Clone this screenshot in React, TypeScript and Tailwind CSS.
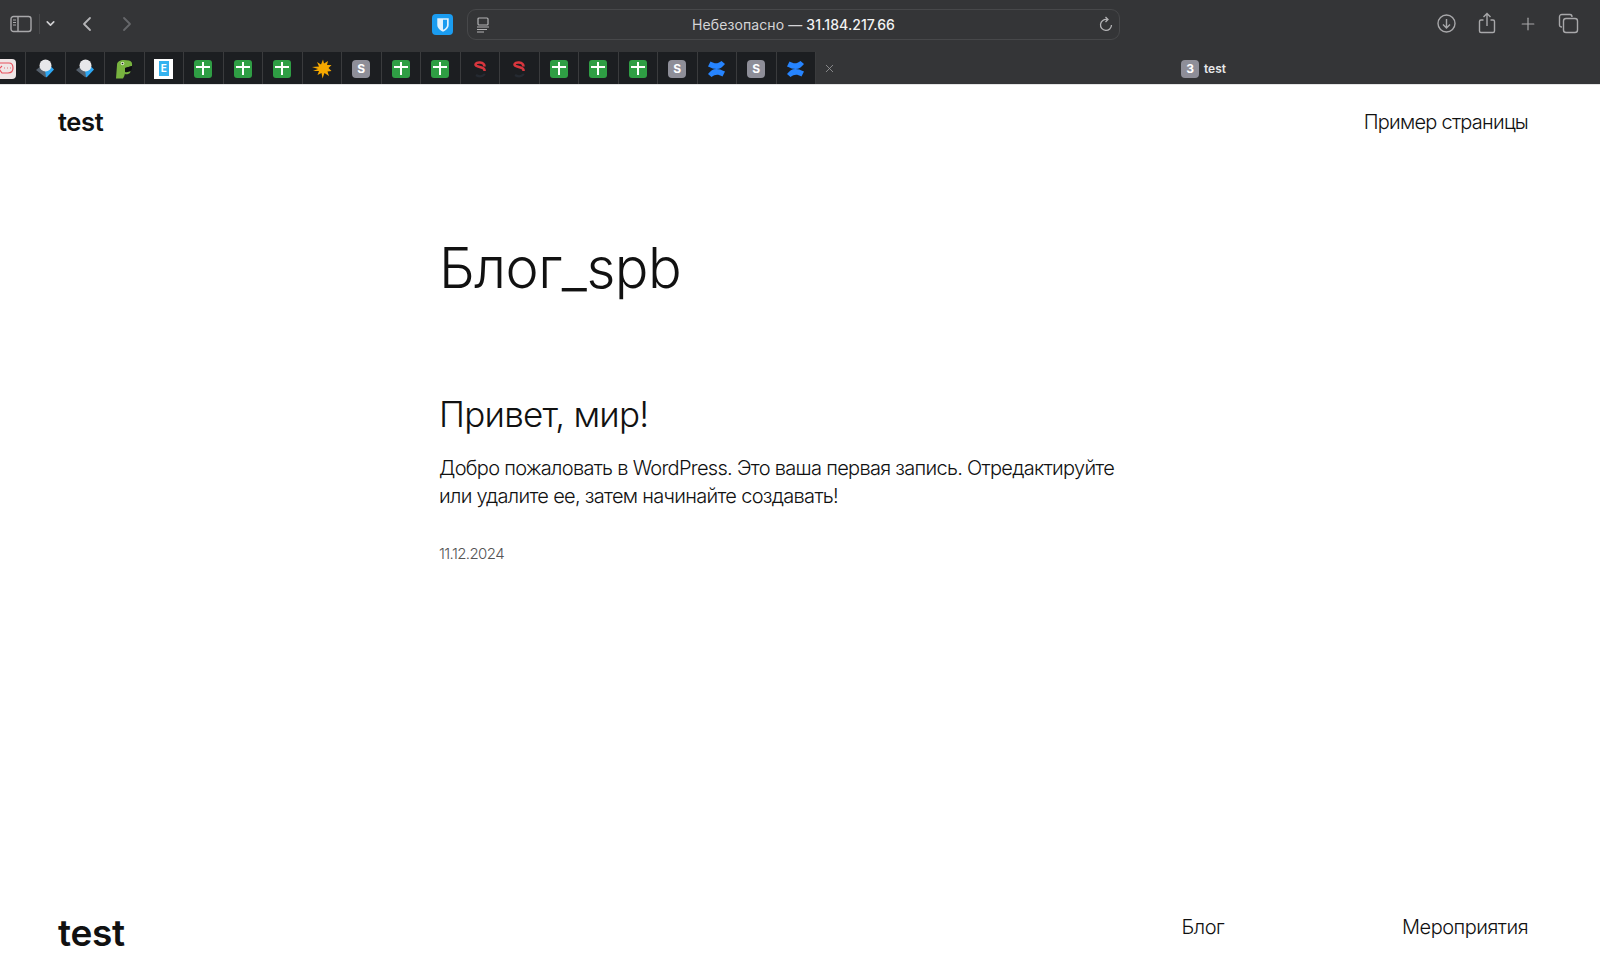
import { ChevronDown, ChevronLeft, ChevronRight, Plus, X } from 'lucide-react';

const Sheet = () => (
  <div className="w-[18px] h-[18px] rounded-[3px] bg-[#2f9e44] relative">
    <div className="absolute left-[2px] w-[14px] h-[2px] bg-white top-[6px]" />
    <div className="absolute left-[8px] w-[2px] h-[13px] bg-white top-[2px]" />
  </div>
);

const Grey = ({ label }: { label: string }) => (
  <div className="w-[18px] h-[18px] rounded-[4px] bg-[#8e8e98] flex items-center justify-center text-white text-[12px] font-bold leading-none">
    {label}
  </div>
);

const Cube = () => (
  <svg width="20" height="19" viewBox="0 0 20 19">
    <path d="M1 11 L6 7 L11 11 L11 18 Q10.5 18.5 10 18 Z" fill="#56606c" />
    <path d="M19 10.5 L14.5 6 L10 11 L11 18 Q11.5 18.5 12 18 Z" fill="#2ea7f2" />
    <circle cx="10.5" cy="6.5" r="6" fill="#e8e8ea" />
  </svg>
);

const Dino = () => (
  <svg width="18" height="20" viewBox="0 0 18 20">
    <path d="M1 19.5 L2 6 C2 2.5 5 1 9 1 L14 1.5 C16.5 2 17.5 4 17 7 L10 9 C10.5 13 10 17 8 19.5 Z" fill="#78b33f" />
    <circle cx="7.5" cy="4.5" r="1.8" fill="#d8e8c0" />
    <circle cx="7.5" cy="4.5" r="0.8" fill="#1c1e21" />
    <path d="M10 9 L17 7 L17 10 C15 13 12 13.5 10 13 Z" fill="#0e0f10" />
    <path d="M10 13 C12 13.5 14 13 15.5 12 L15 14 C13 15.5 11 15.5 10 15 Z" fill="#78b33f" />
  </svg>
);

const EFile = () => (
  <div className="w-[19px] h-[20px] bg-white flex items-center justify-center">
    <div className="w-[10px] h-[15px] bg-[#35b3f0] text-white text-[10px] font-bold leading-[15px] text-center">E</div>
  </div>
);

const Burst = () => (
  <svg width="20" height="20" viewBox="0 0 20 20">
    <path d="M0 8 L7 7.5 L5 3 L9 5.5 L11 0.5 L12 4.5 L16 2 L15 6 L19.5 6 L16.5 9 L19.5 12 L15.5 12.5 L17 17 L12.5 14 L10.5 19.5 L9.5 14 L5.5 16 L7 12 L1 12 L6 10 Z" fill="#f6a800" />
  </svg>
);

const Snake = () => (
  <svg width="14" height="18" viewBox="0 0 14 18">
    <path d="M11.5 6.5 C11.5 1.5 2.5 1.5 2.5 4.5 C2.5 7.5 11.5 6.5 11.5 10 L11.5 11" fill="none" stroke="#d9363e" strokeWidth="2.6" />
    <path d="M3 15 C6 17 9 17 12 14" fill="none" stroke="#252a31" strokeWidth="2.4" />
  </svg>
);

const Confluence = () => (
  <svg width="19" height="18" viewBox="0 0 19 18">
    <path d="M1 14 C5 9 9 7 18 11.5 L15.5 16.5 C11 14 8.5 14 4.5 17 Z" fill="#2684ff" />
    <path d="M18 4 C14 9 10 11 1 6.5 L3.5 1.5 C8 4 10.5 4 14.5 1 Z" fill="#2684ff" />
  </svg>
);

const Memo = () => (
  <div className="w-[21px] h-[20px] rounded-[4px] bg-[#efe6e6] flex items-center justify-center">
    <svg width="16" height="13" viewBox="0 0 16 13" fill="none" stroke="#e8505c" strokeWidth="1.2">
      <path d="M2 1 H11 C14 1 15 3.5 15 6 C15 9 13 11 10 11 H4 L1 7 L4 4" />
      <path d="M6 6 H6.8 M9 6 H9.8 M12 6 H12.8" />
    </svg>
  </div>
);

const tabs = [
  <Memo />, <Cube />, <Cube />, <Dino />, <EFile />, <Sheet />, <Sheet />, <Sheet />, <Burst />, <Grey label="S" />,
  <Sheet />, <Sheet />, <Snake />, <Snake />, <Sheet />, <Sheet />, <Sheet />, <Grey label="S" />, <Confluence />,
  <Grey label="S" />, <Confluence />,
];

const App = () => {
  return (
    <div className="w-[1600px] h-[957px] overflow-hidden bg-white flex flex-col font-['Inter',sans-serif] text-[#111]">
      {/* Browser toolbar */}
      <div className="h-[52px] shrink-0 bg-[#343537] flex items-center relative text-[#b4b4b6]">
        <div className="flex items-center pl-[10px] pb-[5px]">
          <svg width="22" height="18" viewBox="0 0 22 18" fill="none" stroke="#a8a8aa" strokeWidth="1.4">
            <rect x="1" y="1.5" width="20" height="15" rx="2.5" />
            <path d="M8 1.5 V16.5" />
            <path d="M3 5 H6 M3 7.5 H6 M3 10 H6" strokeWidth="1" />
          </svg>
          <div className="w-px h-[20px] bg-[#47484a] ml-[7px]" />
          <ChevronDown size={13} strokeWidth={3} className="ml-[4px] text-[#d0d0d2]" />
          <ChevronLeft size={24} strokeWidth={1.8} className="ml-[18px] text-[#b4b4b6]" />
          <ChevronRight size={24} strokeWidth={1.8} className="ml-[16px] text-[#66676a]" />
        </div>
        <div className="flex items-center absolute left-[432px] top-[9px]">
          <div className="w-[21px] h-[21px] rounded-[4px] bg-[#1a9cf0] flex items-center justify-center">
            <svg width="14" height="16" viewBox="0 0 12 14">
              <path d="M1 1 H11 V7 C11 10 8 12 6 13 C4 12 1 10 1 7 Z" fill="#dff1fd" />
              <path d="M6 2.5 H9.5 V7 C9.5 9 8 10.2 6 11.2 Z" fill="#1a9cf0" />
            </svg>
          </div>
          <div className="ml-[14px] w-[653px] h-[31px] rounded-[9px] border border-[#47484a] flex items-center relative">
            <svg width="16" height="16" viewBox="0 0 16 16" fill="none" stroke="#b4b4b6" strokeWidth="1.2" className="ml-[7px]">
              <rect x="3" y="1" width="10" height="7" rx="1" />
              <path d="M2 10 H14 M2 12.5 H12 M2 15 H9" />
            </svg>
            <div className="absolute inset-0 flex items-center justify-center text-[14px] tracking-[0.1px] text-[#d4d4d6]">
              Небезопасно —&nbsp;<span className="text-[#f2f2f2] font-medium">31.184.217.66</span>
            </div>
            <svg width="16" height="17" viewBox="0 0 16 17" fill="none" stroke="#b4b4b6" strokeWidth="1.3" className="absolute right-[5px] top-[6px]">
              <path d="M9 3.5 A5.5 5.5 0 1 0 13.5 9" />
              <path d="M7.5 1 L10 3.5 L7.5 6" />
            </svg>
          </div>
        </div>
        <div className="absolute right-[21px] top-[13px] flex items-center gap-[20.5px]">
          <svg width="21" height="21" viewBox="0 0 21 21" fill="none" stroke="#a8a8aa" strokeWidth="1.4">
            <circle cx="10.5" cy="10.5" r="8.5" />
            <path d="M10.5 6 V14.5 M7 11.5 L10.5 15 L14 11.5" />
          </svg>
          <svg width="20" height="22" viewBox="0 0 20 22" fill="none" stroke="#a8a8aa" strokeWidth="1.4" className="mt-[-1px]">
            <path d="M6.5 8 H4 Q2.5 8 2.5 9.5 V19 Q2.5 20.5 4 20.5 H16 Q17.5 20.5 17.5 19 V9.5 Q17.5 8 16 8 H13.5" />
            <path d="M10 14 V2 M6.5 5 L10 1.5 L13.5 5" />
          </svg>
          <Plus size={20} strokeWidth={1.4} className="text-[#a8a8aa]" />
          <svg width="21" height="21" viewBox="0 0 21 21" fill="none" stroke="#a8a8aa" strokeWidth="1.4">
            <path d="M4 14 Q1.5 14 1.5 12 V4 Q1.5 1.5 4 1.5 H12 Q14 1.5 14 4" />
            <rect x="5.5" y="5.5" width="14" height="14" rx="2.5" />
          </svg>
        </div>
      </div>

      {/* Tab strip */}
      <div className="h-[32px] shrink-0 bg-[#343537] flex items-stretch relative overflow-hidden">
        <div className="flex items-stretch ml-[-13.5px] bg-[#1c1e21]">
          {tabs.map((icon, i) => (
            <div key={i} className="w-[39.5px] flex items-center justify-center border-r border-[#3a3b3d] pt-[1px]">
              {icon}
            </div>
          ))}
        </div>
        <X size={13} strokeWidth={1.5} className="ml-[7px] self-center text-[#9a9a9c]" />
        <div className="absolute left-[1181px] top-[8px] flex items-center gap-[5px]">
          <Grey label="3" />
          <span className="text-[12px] font-semibold text-[#e8e8ea]">test</span>
        </div>
      </div>
      <div className="h-px shrink-0 bg-[#e4e4e4]" />

      {/* Site */}
      <div className="flex-1 flex flex-col min-h-0">
        <header className="flex items-center justify-between pl-[58px] pr-[72px] pt-[21px]">
          <div className="text-[25.5px] leading-[32px] font-semibold tracking-[-0.4px]">test</div>
          <div className="text-[20px] leading-[32px] font-light tracking-[-0.75px]">Пример страницы</div>
        </header>
        <main className="ml-[439px] flex-1">
          <h1 className="mt-[94px] text-[56px] leading-[72px] font-[350] tracking-[-0.5px]">Блог_spb</h1>
          <h2 className="mt-[87px] text-[35px] leading-[46px] font-[350] tracking-[-0.75px]">Привет, мир!</h2>
          <p className="mt-[18px] w-[690px] text-[20px] leading-[27.5px] font-light tracking-[-0.7px]">
            Добро пожаловать в WordPress. Это ваша первая запись. Отредактируйте или удалите ее, затем начинайте создавать!
          </p>
          <div className="mt-[34px] text-[15px] leading-[20px] font-light tracking-[-0.6px] text-[#555]">11.12.2024</div>
        </main>
        <footer className="flex items-start justify-between pl-[58px] pr-[72px] pb-[2px]">
          <div className="text-[37px] leading-[44px] font-semibold tracking-[-0.3px]">test</div>
          <div className="flex gap-[178px] text-[20px] leading-[32px] font-light tracking-[-0.5px]">
            <span>Блог</span>
            <span>Мероприятия</span>
          </div>
        </footer>
      </div>
    </div>
  );
};

export default App;
